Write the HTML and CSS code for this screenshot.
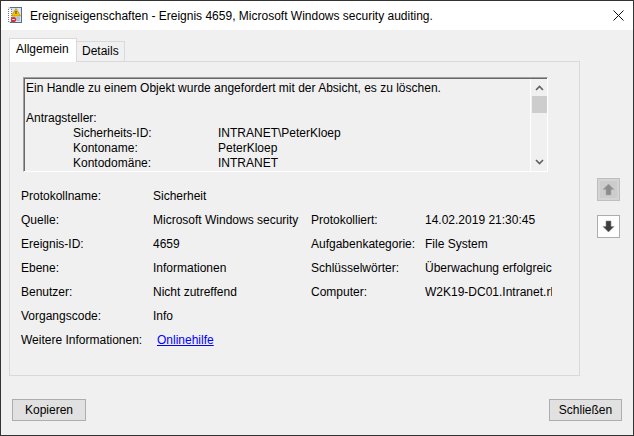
FILE: index.html
```html
<!DOCTYPE html>
<html lang="de">
<head>
  <meta charset="UTF-8">
  <title>Ereigniseigenschaften</title>
  <link rel="stylesheet" href="styles.css">
</head>
<body>
  <div class="window">
    <div class="titlebar">
      <svg class="app-icon" width="14" height="16" viewBox="0 0 14 16">
        <rect x="2.5" y="0.5" width="11" height="15" fill="#dfe6f0" stroke="#5a6c8c"/>
        <rect x="0.5" y="1" width="3" height="14" fill="#fff" stroke="#6b7a96" stroke-dasharray="1 1"/>
        <line x1="5" y1="11" x2="12" y2="11" stroke="#8a9ab8"/>
        <line x1="5" y1="13" x2="12" y2="13" stroke="#8a9ab8"/>
        <polygon points="8,1.5 12.5,9 3.5,9" fill="#f5c400" stroke="#b08a00" stroke-width="0.7"/>
        <rect x="7.5" y="4" width="1" height="3" fill="#333"/>
        <circle cx="5.5" cy="12.5" r="2.6" fill="#d83030"/>
        <rect x="4.3" y="12" width="2.4" height="1" fill="#fff"/>
      </svg>
      <span class="title">Ereigniseigenschaften - Ereignis 4659, Microsoft Windows security auditing.</span>
      <svg class="close" width="11" height="11" viewBox="0 0 11 11">
        <path d="M0.5 0.5 L10.5 10.5 M10.5 0.5 L0.5 10.5" stroke="#111" stroke-width="1"/>
      </svg>
    </div>

    <div class="content">
      <div class="main">
        <div class="tabs">
          <div class="tab active">Allgemein</div>
          <div class="tab">Details</div>
        </div>
        <div class="panel">
          <div class="textbox">
            <div class="message">
              <div>Ein Handle zu einem Objekt wurde angefordert mit der Absicht, es zu löschen.</div>
              <div>&nbsp;</div>
              <div>Antragsteller:</div>
              <div class="sub"><span class="sub-label">Sicherheits-ID:</span><span>INTRANET\PeterKloep</span></div>
              <div class="sub"><span class="sub-label">Kontoname:</span><span>PeterKloep</span></div>
              <div class="sub"><span class="sub-label">Kontodomäne:</span><span>INTRANET</span></div>
            </div>
            <div class="scrollbar">
              <svg width="9" height="6" viewBox="0 0 9 6"><path d="M1 5 L4.5 1.5 L8 5" fill="none" stroke="#606060" stroke-width="1.6"/></svg>
              <div class="thumb"></div>
              <div class="track"></div>
              <svg width="9" height="6" viewBox="0 0 9 6"><path d="M1 1 L4.5 4.5 L8 1" fill="none" stroke="#606060" stroke-width="1.6"/></svg>
            </div>
          </div>

          <div class="fields">
            <div class="label">Protokollname:</div>
            <div class="value">Sicherheit</div>
            <div></div>
            <div></div>

            <div class="label">Quelle:</div>
            <div class="value">Microsoft Windows security</div>
            <div class="label">Protokolliert:</div>
            <div class="value">14.02.2019 21:30:45</div>

            <div class="label">Ereignis-ID:</div>
            <div class="value">4659</div>
            <div class="label">Aufgabenkategorie:</div>
            <div class="value">File System</div>

            <div class="label">Ebene:</div>
            <div class="value">Informationen</div>
            <div class="label">Schlüsselwörter:</div>
            <div class="value">Überwachung erfolgreich</div>

            <div class="label">Benutzer:</div>
            <div class="value">Nicht zutreffend</div>
            <div class="label">Computer:</div>
            <div class="value">W2K19-DC01.Intranet.rheinwerk</div>

            <div class="label">Vorgangscode:</div>
            <div class="value">Info</div>
            <div></div>
            <div></div>

            <div class="label wide">Weitere Informationen:</div>
            <div class="value"><a href="#" class="link">Onlinehilfe</a></div>
          </div>
        </div>
      </div>

      <div class="nav">
        <button class="nav-btn disabled" aria-label="Vorheriges Ereignis">
          <svg width="13" height="13" viewBox="0 0 13 13"><polygon points="6.5,1 12,6.5 9,6.5 9,12 4,12 4,6.5 1,6.5" fill="#8c8c8c" stroke="#a8a8a8" stroke-width="0.6"/></svg>
        </button>
        <button class="nav-btn" aria-label="Nächstes Ereignis">
          <svg width="13" height="13" viewBox="0 0 13 13"><polygon points="6.5,12 12,6.5 9,6.5 9,1 4,1 4,6.5 1,6.5" fill="#3c3c3c" stroke="#8a8a8a" stroke-width="0.6"/></svg>
        </button>
      </div>
    </div>

    <div class="footer">
      <button class="btn btn-copy">Kopieren</button>
      <button class="btn btn-close">Schließen</button>
    </div>
  </div>
</body>
</html>
```

FILE: styles.css
```css
* {
  box-sizing: border-box;
}
body {
  margin: 0;
  font-family: 'Liberation Sans', Arial, sans-serif;
  font-size: 12px;
  color: #000;
}
.window {
  width: 634px;
  height: 436px;
  border: 1px solid #333;
  background-color: #f0f0f0;
  display: flex;
  flex-direction: column;
}
.titlebar {
  height: 29px;
  background-color: #fff;
  display: flex;
  align-items: center;
  padding-left: 7px;
  padding-right: 9px;
}
.app-icon {
  margin-right: 8px;
  margin-top: -1px;
}
.title {
  flex: 1;
  padding-top: 1px;
}
.close {
  margin-top: -1px;
}
.content {
  display: flex;
  padding: 8px 0 0 8px;
}
.main {
  width: 571px;
}
.tabs {
  display: flex;
  align-items: flex-end;
  height: 23px;
}
.tab {
  height: 20px;
  padding: 2px 5px 0 5px;
  border: 1px solid #d9d9d9;
  border-bottom: none;
  border-left: none;
  background-color: #f0f0f0;
}
.tab.active {
  height: 24px;
  padding: 3px 7px 0 6px;
  margin-bottom: -1px;
  border-left: 1px solid #d9d9d9;
  background-color: #fff;
  position: relative;
  z-index: 1;
  width: 68px;
}
.panel {
  height: 315px;
  border: 1px solid #d9d9d9;
  padding: 15px 13px 0 13px;
}
.textbox {
  width: 525px;
  height: 95px;
  display: flex;
  border: 1px solid;
  border-color: #a0a0a0 #fff #fff #a0a0a0;
  box-shadow: inset 1px 1px 0 #696969;
}
.message {
  flex: 1;
  padding: 3px 0 0 2px;
  line-height: 15px;
  overflow: hidden;
  white-space: nowrap;
}
.sub {
  display: flex;
  padding-left: 47px;
}
.sub-label {
  width: 145px;
}
.scrollbar {
  width: 17px;
  border-left: 1px solid #fff;
  margin-top: 1px;
  display: flex;
  flex-direction: column;
  align-items: center;
  padding-top: 6px;
  padding-bottom: 6px;
}
.thumb {
  width: 15px;
  height: 17px;
  margin-top: 5px;
  background-color: #cdcdcd;
}
.track {
  flex: 1;
}
.fields {
  display: grid;
  grid-template-columns: 132px 158px 114px 127px;
  grid-auto-rows: 24px;
  align-items: center;
  margin: 12px 0 0 -2px;
  white-space: nowrap;
}
.value {
  overflow: hidden;
}
.label.wide {
  overflow: visible;
}
.link {
  color: #0000ff;
  padding-left: 4px;
}
.nav {
  display: flex;
  flex-direction: column;
  gap: 14px;
  margin: 140px 0 0 17px;
}
.nav-btn {
  width: 23px;
  height: 23px;
  padding: 0;
  border: 1px solid #adadad;
  background-color: #fdfdfd;
  display: flex;
  align-items: center;
  justify-content: center;
}
.nav-btn.disabled {
  background-color: #cccccc;
  border-color: #bfbfbf;
  box-shadow: inset 0 0 0 2px #d4d4d4;
}
.footer {
  margin-top: auto;
  display: flex;
  justify-content: space-between;
  padding: 0 11px 14px 11px;
}
.btn {
  height: 22px;
  border: 1px solid #adadad;
  background-color: #e1e1e1;
  font-family: inherit;
  font-size: 12px;
  color: #000;
  padding: 0;
}
.btn-copy {
  width: 74px;
}
.btn-close {
  width: 73px;
}
```
